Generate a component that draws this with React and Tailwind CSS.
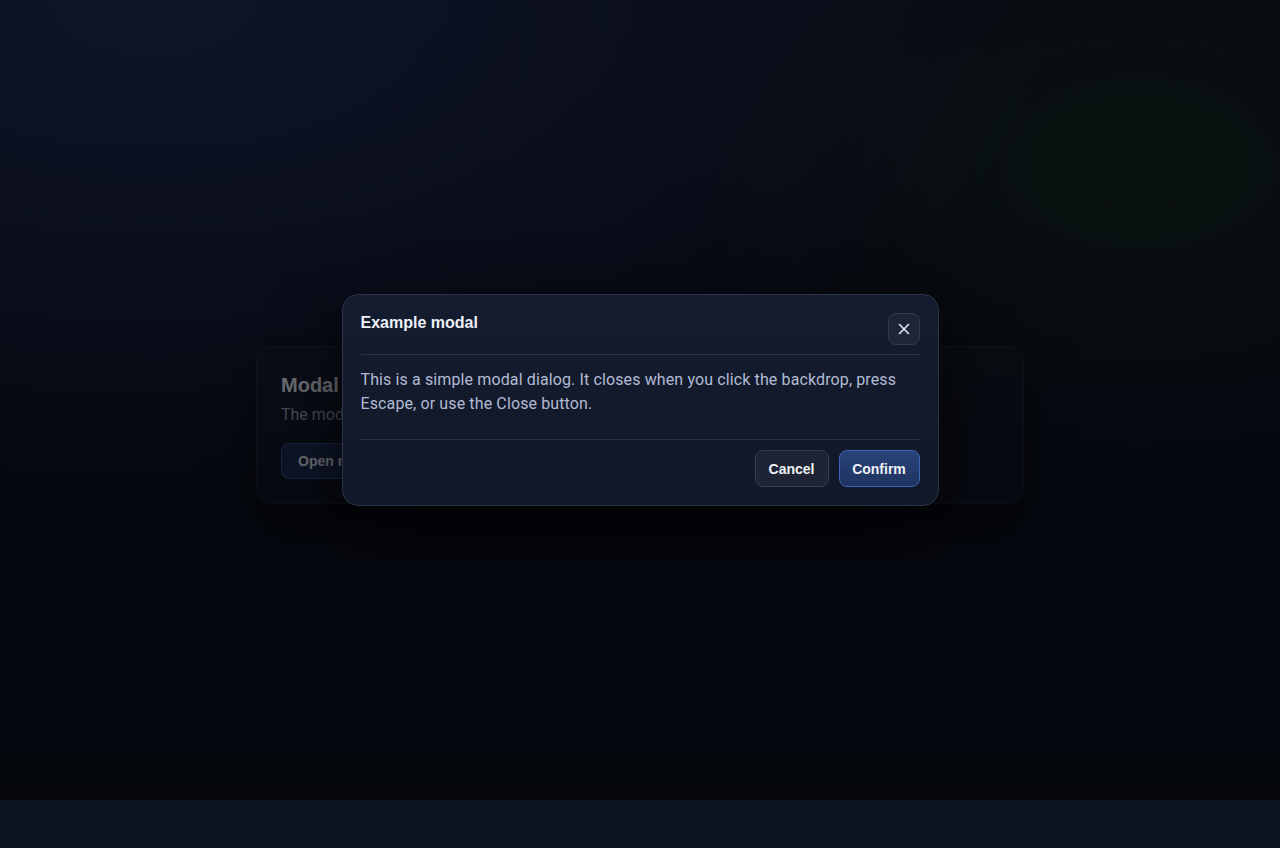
import React from "react";

const font = { fontFamily: "Roboto, 'Liberation Sans', sans-serif" };
const bold = { fontFamily: "'Liberation Sans', Arial, sans-serif" };

const App = () => {
  return (
    <div className="w-full min-h-[848px] bg-[#0d1220]" style={font}>
      <div className="relative h-[800px] bg-[radial-gradient(ellipse_70%_60%_at_12%_0%,#1f2b52_0%,transparent_100%),radial-gradient(ellipse_35%_35%_at_89%_21%,#13241f_0%,transparent_100%),linear-gradient(#0f1528,#0a0e1b)]">
        {/* page content behind the modal */}
        <div className="flex justify-center pt-[346px]">
          <div className="w-[768px] rounded-2xl border border-white/5 bg-white/[0.02] px-6 pt-6 pb-6 shadow-[0_20px_50px_rgba(0,0,0,0.5)]">
            <h2 className="text-xl font-bold text-[#d4d8e0] leading-7" style={bold}>Modal demo</h2>
            <p className="mt-1 text-base text-[#8a93a6]">The modal opens above the page and dims everything behind it.</p>
            <button className="mt-4 h-9 px-4 rounded-lg border border-[#2a4a8a] bg-[#1b2a4d] text-sm font-bold text-[#d4d8e0]" style={bold}>
              Open modal
            </button>
          </div>
        </div>

        {/* backdrop */}
        <div className="absolute inset-0 bg-black/50 flex items-center justify-center">
          <div className="w-[597px] rounded-2xl border border-[#2a3347] bg-[linear-gradient(#141c30,#111827)] px-[18px] pt-[18px] pb-[18px] shadow-[0_24px_70px_rgba(0,0,0,0.7)]">
            <div className="flex items-start justify-between">
              <h3 className="text-base font-bold text-[#eef1f7] leading-6 -mt-[2px]" style={bold}>Example modal</h3>
              <button className="w-8 h-8 rounded-lg border border-[#323b50] bg-[#1d2536] flex items-center justify-center text-[#e6e9f0]">
                <svg width="14" height="14" viewBox="0 0 14 14" fill="none" stroke="currentColor" strokeWidth="1.6" strokeLinecap="round">
                  <path d="M2.5 2.5l9 9M11.5 2.5l-9 9" />
                </svg>
              </button>
            </div>
            <div className="mt-[9px] h-px bg-[#2a3245]" />
            <p className="pt-[13px] pb-[23px] text-base leading-6 tracking-[0.12px] text-[#b2bbd4]">
              This is a simple modal dialog. It closes when you click the backdrop, press Escape, or use the Close button.
            </p>
            <div className="h-px bg-[#2a3245]" />
            <div className="flex justify-end gap-[10px] pt-[10px]">
              <button className="h-[37px] w-[74px] rounded-lg border border-[#353c4c] bg-[#1e2433] text-sm font-bold text-[#eef1f7]" style={bold}>
                Cancel
              </button>
              <button className="h-[37px] w-[81px] rounded-lg border border-[#3d64b8] bg-[linear-gradient(#28427a,#1f345f)] text-sm font-bold text-[#eef1f7]" style={bold}>
                Confirm
              </button>
            </div>
          </div>
        </div>
      </div>
    </div>
  );
};

export default App;
